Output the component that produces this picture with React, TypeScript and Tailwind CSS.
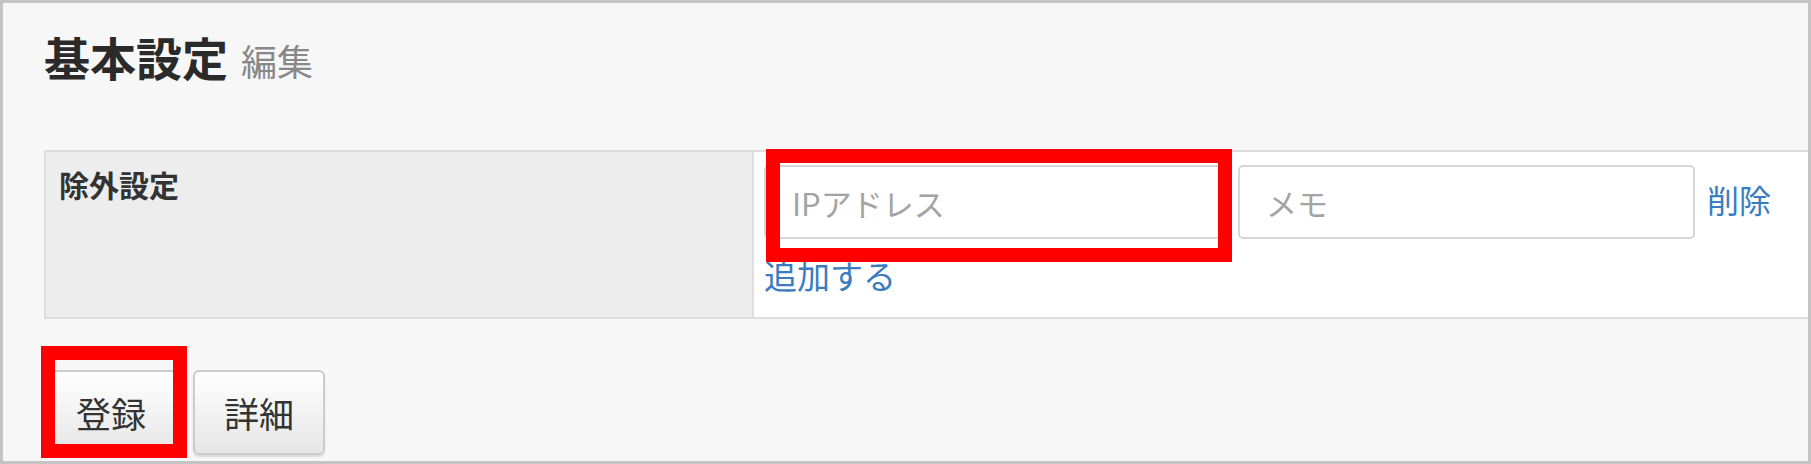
import React from "react";

export default function App() {
  return (
    <div className="relative w-[1811px] h-[464px] overflow-hidden bg-[#f7f7f7] border-[3px] border-[#c4c4c4] pl-[41px] pt-[30px] font-['Noto_Sans_CJK_JP','Noto_Sans',sans-serif]">
      <div className="flex items-baseline h-[46px]">
        <h1 className="text-[46px] leading-[46px] font-bold text-[#2a2a2a]">基本設定</h1>
        <span className="ml-[13px] text-[36px] leading-[46px] text-[#888888]">編集</span>
      </div>

      <div className="mt-[71px] flex h-[169px] border-y-2 border-l-2 border-[#dedede]">
        <div className="w-[708px] shrink-0 bg-[#ededed] border-r-2 border-[#dedede] pl-[13px] pt-[17px]">
          <span className="block text-[30px] leading-[30px] font-bold text-[#333333]">除外設定</span>
        </div>
        <div className="flex-1 bg-white pl-[10px] pt-[13px]">
          <div className="flex items-start">
            <input
              placeholder="IPアドレス"
              className="w-[457px] h-[74px] border-2 border-[#d6d6d6] rounded-[5px] bg-white pl-[26px] text-[31px] text-[#333] placeholder:text-[#a3a3a3] outline-none"
            />
            <input
              placeholder="メモ"
              className="ml-[17px] w-[457px] h-[74px] border-2 border-[#d6d6d6] rounded-[5px] bg-white pl-[26px] text-[31px] text-[#333] placeholder:text-[#a3a3a3] outline-none"
            />
            <a className="ml-[12px] mt-[14px] text-[32px] leading-[40px] text-[#3a7cc0] cursor-pointer">削除</a>
          </div>
          <a className="block mt-[20px] text-[33px] leading-[33px] text-[#3a7cc0] cursor-pointer">追加する</a>
        </div>
      </div>

      <div className="mt-[51px] ml-[1px] flex gap-[16px]">
        <button className="w-[132px] h-[85px] rounded-[6px] border-2 border-[#cccccc] bg-gradient-to-b from-[#ffffff] to-[#e6e6e6] shadow-[0_2px_2px_rgba(0,0,0,0.12)] text-[35px] leading-none text-[#333333]">
          登録
        </button>
        <button className="w-[132px] h-[85px] rounded-[6px] border-2 border-[#cccccc] bg-gradient-to-b from-[#ffffff] to-[#e6e6e6] shadow-[0_2px_2px_rgba(0,0,0,0.12)] text-[35px] leading-none text-[#333333]">
          詳細
        </button>
      </div>

      <div className="absolute left-[763px] top-[146px] w-[466px] h-[113px] border-[14px] border-[#ff0000]" />
      <div className="absolute left-[38px] top-[343px] w-[146px] h-[112px] border-[14px] border-[#ff0000]" />
    </div>
  );
}
